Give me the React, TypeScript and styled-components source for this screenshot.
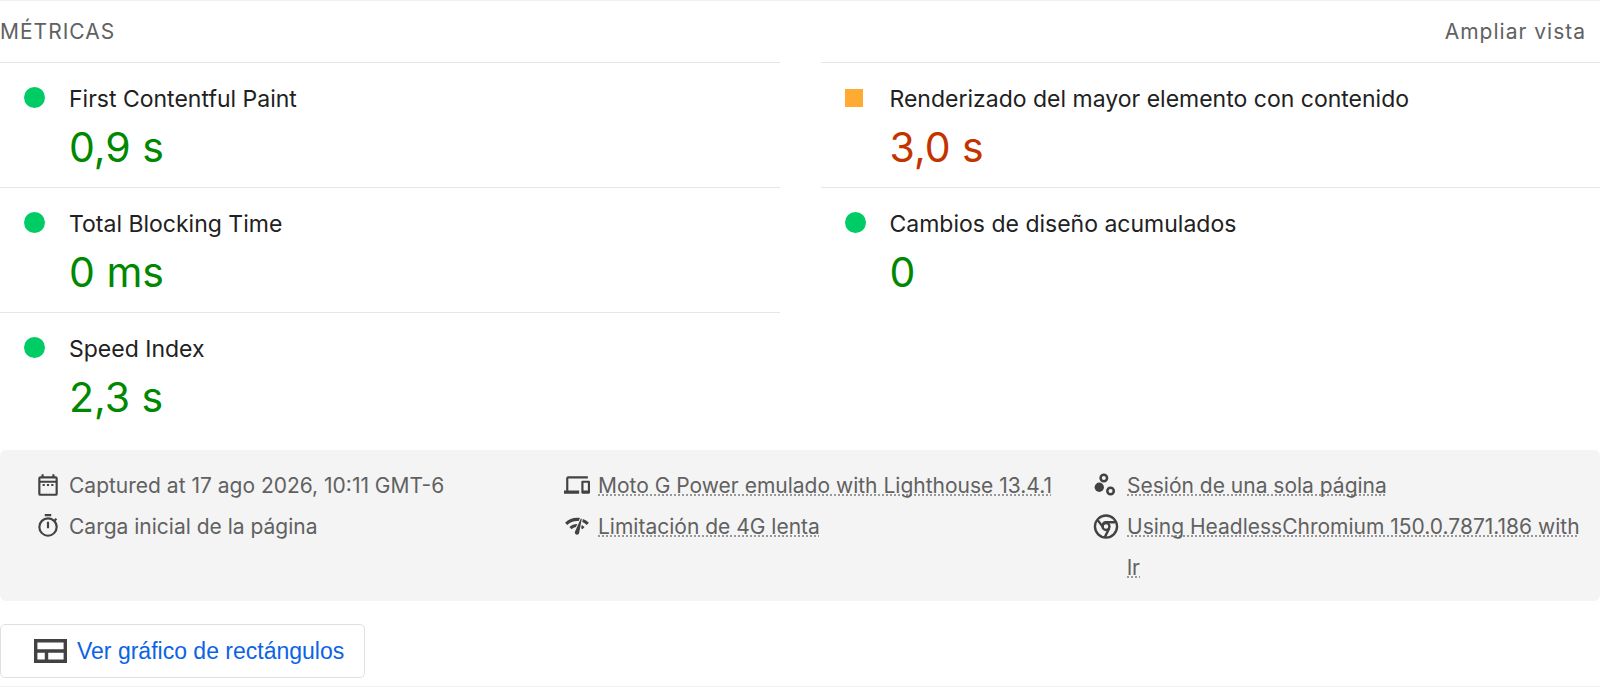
import React from 'react';
import styled, { createGlobalStyle } from 'styled-components';

const GlobalStyle = createGlobalStyle`
  * { box-sizing: border-box; }
  body { margin: 0; background: #fff; color: #212121; font-family: Inter, sans-serif; }
`;

const Report = styled.main`
  border-top: 1px solid #f2f2f2;
  border-bottom: 1px solid #f2f2f2;
  padding-bottom: 8px;
`;

const Header = styled.header`
  display: flex;
  align-items: center;
  justify-content: space-between;
  height: 61px;
  padding-right: 14px;
  color: #616161;
`;

const Title = styled.h2`
  margin: 0;
  font-size: 21px;
  font-weight: 400;
  letter-spacing: 1px;
  text-transform: uppercase;
`;

const Toggle = styled.button`
  padding: 0;
  border: 0;
  background: none;
  color: inherit;
  font: 21px Inter, sans-serif;
  letter-spacing: 1px;
  cursor: pointer;
`;

const Metrics = styled.section`
  display: grid;
  grid-template-columns: 1fr 1fr;
  column-gap: 41px;
`;

const Metric = styled.div`
  display: grid;
  grid-template-columns: 69px 1fr;
  align-content: start;
  height: 125px;
  padding-top: 21px;
  border-top: 1px solid #e6e6e6;
`;

const Marker = styled.span<{ $average?: boolean }>`
  width: ${p => (p.$average ? 18 : 21)}px;
  height: ${p => (p.$average ? 18 : 21)}px;
  margin: ${p => (p.$average ? 5 : 3)}px 0 0 24px;
  border-radius: ${p => (p.$average ? 0 : '50%')};
  background: ${p => (p.$average ? '#fa3' : '#0c6')};
`;

const MetricName = styled.span`
  font-size: 23px;
  line-height: 30px;
`;

const MetricValue = styled.span<{ $average?: boolean }>`
  grid-column: 2;
  margin-top: 8px;
  font-size: 41px;
  line-height: 50px;
  color: ${p => (p.$average ? '#c33300' : '#080')};
`;

const Meta = styled.ul`
  display: grid;
  grid-template-columns: repeat(3, 1fr);
  column-gap: 36px;
  margin: 13px 0 23px;
  padding: 15px 14px 13px 35px;
  border-radius: 6px;
  background: #f4f4f4;
  color: #616161;
  font-size: 21px;
  line-height: 41px;
  list-style: none;
`;

const MetaItem = styled.li`
  display: flex;
  gap: 8px;
`;

const MetaIcon = styled.svg`
  flex: none;
  width: 26px;
  height: 26px;
  margin-top: 7px;
  fill: #424242;
`;

const MetaLink = styled.a`
  color: inherit;
  text-decoration: underline dotted 2px #999;
  text-underline-offset: 1px;
  text-decoration-skip-ink: none;
`;

const TreemapButton = styled.button`
  display: inline-flex;
  align-items: center;
  gap: 10px;
  height: 54px;
  padding: 0 20px 0 33px;
  border: 1px solid #e0e0e0;
  border-radius: 5px;
  background: #fff;
  color: #0b63e5;
  font: 23px 'Liberation Sans', sans-serif;
  cursor: pointer;
`;

const icons = {
  date: <path d="M7 11h2v2H7v-2zm14-5v14a2 2 0 01-2 2H5a2 2 0 01-2-2l.01-14c0-1.1.88-2 1.99-2h1V2h2v2h8V2h2v2h1a2 2 0 012 2zM5 8h14V6H5v2zm14 12V10H5v10h14zm-4-7h2v-2h-2v2zm-4 0h2v-2h-2v2z" />,
  devices: <path d="M4 6h18V4H4a2 2 0 00-2 2v11H0v3h14v-3H4V6zm19 2h-6a1 1 0 00-1 1v10c0 .6.5 1 1 1h6c.6 0 1-.5 1-1V9c0-.6-.5-1-1-1zm-1 9h-4v-7h4v7z" />,
  samples: (
    <>
      <circle cx="5.8" cy="14.100" r="4.3" />
      <g fill="none" stroke="#424242" strokeWidth="2.3">
        <circle cx="10" cy="5.5" r="3" />
        <circle cx="16.200" cy="17.500" r="3" />
      </g>
    </>
  ),
  stopwatch: <path d="M15 1H9v2h6V1zm-4 13h2V8h-2v6zm8.1-6.6L20.5 6l-1.4-1.4L17.7 6A9 9 0 0012 3.9a9 9 0 109 9c0-2-.7-4-2-5.5zM12 20a7 7 0 110-14 7 7 0 010 14z" />,
  network: <path d="M15.9 5c-.17 0-.32.09-.41.23l-.07.15-5.18 11.65c-.16.29-.26.61-.26.96 0 1.11.9 2.01 2.01 2.01.96 0 1.77-.68 1.96-1.59l.01-.03L16.4 5.5c0-.28-.22-.5-.5-.5zM1 9l2 2c2.88-2.88 6.79-4.08 10.53-3.62l1.19-2.68C9.89 3.84 4.74 5.27 1 9zm20 2l2-2a15.367 15.367 0 00-5.59-3.57l-.53 2.82c1.5.62 2.9 1.53 4.12 2.75zm-4 4l2-2c-.8-.8-1.7-1.42-2.66-1.89l-.55 2.92c.42.27.83.59 1.21.97zM5 13l2 2a7.1 7.1 0 014.03-2l1.28-2.88c-2.63-.08-5.3.87-7.31 2.88z" />,
  chrome: (
    <g fill="none" stroke="#424242" strokeWidth="2.2">
      <circle cx="12" cy="12.5" r="10.2" />
      <circle cx="12" cy="12.5" r="3.2" />
      <path d="M21 8.500H11.500Q9 9 8.800 12.500L4.500 6.800M15 14L10.800 22.500" />
    </g>
  ),
};

type Item = { icon: keyof typeof icons; text: string; link?: boolean };

const items: Item[] = [
  { icon: 'date', text: 'Captured at 17 ago 2026, 10:11 GMT-6' },
  { icon: 'devices', text: 'Moto G Power emulado with Lighthouse 13.4.1', link: true },
  { icon: 'samples', text: 'Sesión de una sola página', link: true },
  { icon: 'stopwatch', text: 'Carga inicial de la página' },
  { icon: 'network', text: 'Limitación de 4G lenta', link: true },
  { icon: 'chrome', text: 'Using HeadlessChromium 150.0.7871.186 with lr', link: true },
];

const metrics = [
  { name: 'First Contentful Paint', value: '0,9 s' },
  { name: 'Renderizado del mayor elemento con contenido', value: '3,0 s', average: true },
  { name: 'Total Blocking Time', value: '0 ms' },
  { name: 'Cambios de diseño acumulados', value: '0' },
  { name: 'Speed Index', value: '2,3 s' },
];

export default function App() {
  return (
    <Report>
      <GlobalStyle />
      <Header>
        <Title>Métricas</Title>
        <Toggle type="button">Ampliar vista</Toggle>
      </Header>
      <Metrics>
        {metrics.map(m => (
          <Metric key={m.name}>
            <Marker $average={m.average} />
            <MetricName>{m.name}</MetricName>
            <MetricValue $average={m.average}>{m.value}</MetricValue>
          </Metric>
        ))}
      </Metrics>
      <Meta>
        {items.map(i => (
          <MetaItem key={i.icon}>
            <MetaIcon viewBox="0 0 24 24" aria-hidden="true">{icons[i.icon]}</MetaIcon>
            {i.link ? <span><MetaLink href="#">{i.text}</MetaLink></span> : <span>{i.text}</span>}
          </MetaItem>
        ))}
      </Meta>
      <TreemapButton type="button">
        <svg width="33" height="24" viewBox="0 0 33 24" fill="none" stroke="#424242" strokeWidth="3.4" aria-hidden="true">
          <path d="M1.700 1.700h29.600v20.600H1.700zM2 12h29M12.500 12v10" />
        </svg>
        Ver gráfico de rectángulos
      </TreemapButton>
    </Report>
  );
}
